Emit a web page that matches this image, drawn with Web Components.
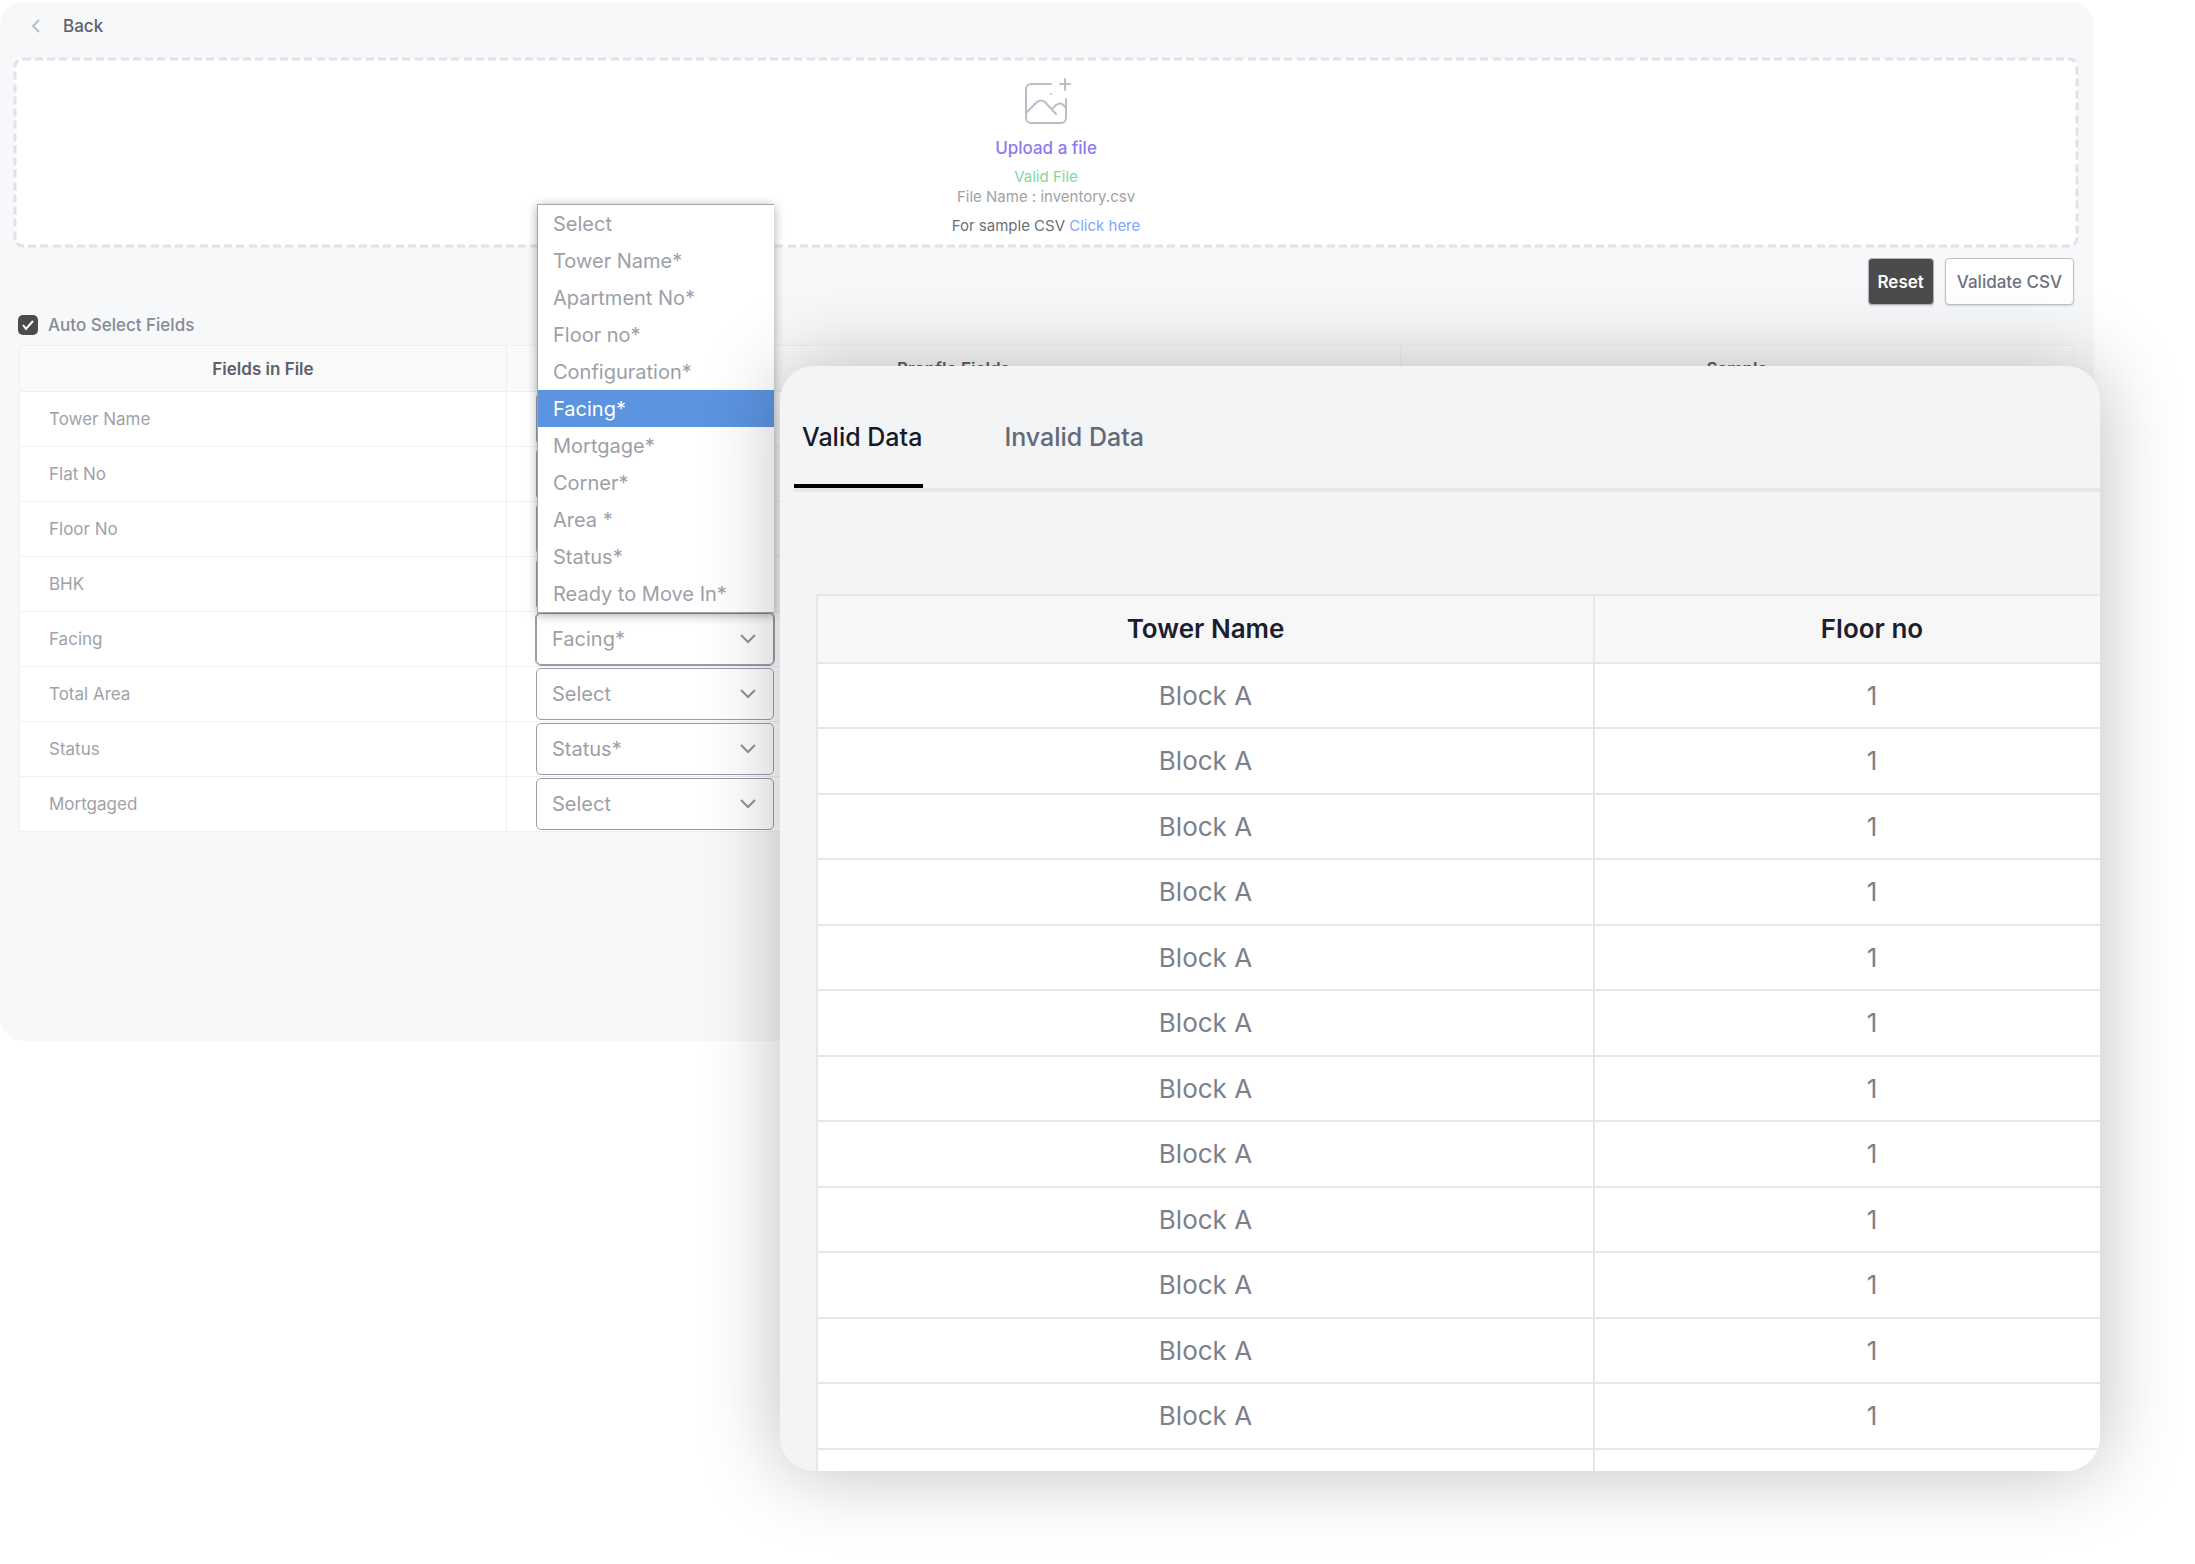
<!DOCTYPE html>
<html lang="en">
<head>
<meta charset="utf-8">
<title>Inventory import</title>
<style>
  body { margin: 0; font-family: Inter, "Liberation Sans", sans-serif; background: #fff; }
</style>
</head>
<body>
<import-page></import-page>
<script>
const define = (name, html, setup) => {
  const template = document.createElement('template');
  template.innerHTML = html;
  customElements.define(name, class extends HTMLElement {
    connectedCallback() {
      if (this.shadowRoot) return;
      const root = this.attachShadow({ mode: 'open' });
      root.append(template.content.cloneNode(true));
      if (setup) setup(root, this);
    }
  });
};

define('back-link', `
<style>
  :host { display: block; }
  a { display: inline-flex; align-items: center; gap: 23px; padding: 12px 30px; color: #5b606c;
      font-size: 17px; font-weight: 500; line-height: 24px; text-decoration: none; }
  svg { width: 10px; height: 14px; fill: none; stroke: #b9bdc6; stroke-width: 2; }
</style>
<a href="#back"><svg viewBox="0 0 10 14" aria-hidden="true"><path d="M9 1 3 7l6 6"/></svg><slot></slot></a>`);

define('upload-box', `
<style>
  :host { display: grid; margin: 0 15px 0 13px; }
  .frame, .body { grid-area: 1 / 1; }
  .frame { width: 100%; height: 100%; min-height: 0; contain: size; }
  .frame rect { x: 2px; y: 2px; width: calc(100% - 4px); height: calc(100% - 4px); fill: #fff; stroke: #e0e2e7;
      stroke-width: 3; stroke-dasharray: 8 4 8 4 8 4 8 5; }
  .body { display: flex; flex-direction: column; align-items: center; padding: 20px 0 12px; }
  .icon { width: 50px; height: 50px; fill: none; stroke: #b9bdc6; stroke-width: 2; stroke-linecap: round; }
  .upload { margin: 9px 0 7px; border: 0; padding: 0; background: none; color: #8b7bf0; font: 500 17px/24px Inter, sans-serif; }
  p { margin: 0; font-size: 15px; line-height: 20px; color: #a0a2a8; }
  .ok { color: #7fd8a0; }
  .sample { margin-top: 9px; color: #6a6f7b; }
  a { color: #82a6fa; text-decoration: none; }
</style>
<svg class="frame" aria-hidden="true"><rect rx="8"/></svg>
<div class="body">
  <svg class="icon" viewBox="-1 0 50 50" aria-hidden="true">
    <path d="M29 7H9a5 5 0 0 0-5 5v29a5 5 0 0 0 5 5h30a5 5 0 0 0 5-5V22M43 2v11M38 7h10"/>
    <path d="M5 35 15 25q4-3 8 0L34 37M30 32l4-4q5-4 9 2"/><circle cx="29" cy="17" r="1" fill="#b9bdc6" stroke="none"/>
  </svg>
  <button class="upload" type="button">Upload a file</button>
  <p class="ok">Valid File</p>
  <p>File Name : inventory.csv</p>
  <p class="sample">For sample CSV <a href="#sample">Click here</a></p>
</div>`);

define('app-button', `
<style>
  :host { display: block; }
  button { display: block; height: 47px; padding: 0 11px; border: 1px solid #bcc0cb; border-radius: 4px; background: #fff;
      color: #6d727e; font: 500 17px/24px Inter, sans-serif; box-shadow: 0 1px 2px #0002; }
  :host([primary]) button { padding: 0 9px; background: #4b4b4b; border-color: #b4b6bb; color: #fff; font-weight: 600; }
</style>
<button type="button"><slot></slot></button>`);

define('check-field', `
<style>
  :host { display: block; }
  label { display: inline-flex; align-items: center; gap: 10px; color: #868b96; font-size: 17px; font-weight: 500; line-height: 24px; }
  .box { display: grid; }
  input, svg { grid-area: 1 / 1; width: 20px; height: 20px; margin: 0; }
  input { appearance: none; border-radius: 5px; background: #4b4b4b; }
  svg { fill: none; stroke: #fff; stroke-width: 2; pointer-events: none; }
</style>
<label><span class="box"><input type="checkbox" checked><svg viewBox="0 0 20 20" aria-hidden="true"><path d="m5 10 3 4 7-8"/></svg></span><slot></slot></label>`);

define('field-select', `
<style>
  :host { display: block; position: relative; width: 238px; }
  .control { display: grid; align-items: center; }
  select, svg { grid-area: 1 / 1; }
  select { appearance: none; box-sizing: border-box; width: 100%; height: 52px; padding: 0 15px; border: 1px solid #9a9da8;
      border-radius: 5px; background: #fff; color: #9ca0a8; font: 400 20px/26px Inter, sans-serif; }
  svg { justify-self: end; width: 16px; height: 10px; margin-right: 18px; fill: none; stroke: #8f929c; stroke-width: 2; pointer-events: none; }
  :host([open]) select { outline: 1px solid #9a9da8; }
  ul { display: none; position: absolute; left: 1px; right: 0; bottom: 100%; margin: 0; padding: 0; list-style: none;
      border: solid #a5a5a5; border-width: 1px 0 1px 1px; background: #fff; box-shadow: 0 2px 10px #0005; z-index: 1; }
  :host([open]) ul { display: block; }
  li { padding: 6px 15px 5px; color: #9ca0a8; font-size: 20px; line-height: 26px; text-align: left; }
  li[aria-selected="true"] { background: #5c94e0; color: #fff; }
</style>
<div class="control"><select></select><svg viewBox="0 0 16 10" aria-hidden="true"><path d="m1 1 7 7 7-7"/></svg></div>
<ul role="listbox"></ul>`, (root, host) => {
  const options = ['Select', 'Tower Name*', 'Apartment No*', 'Floor no*', 'Configuration*', 'Facing*', 'Mortgage*', 'Corner*', 'Area *', 'Status*', 'Ready to Move In*'];
  const value = host.getAttribute('value');
  const select = root.querySelector('select');
  select.setAttribute('aria-label', host.getAttribute('label'));
  for (const text of options) {
    select.add(new Option(text, text, false, text === value));
    if (!host.hasAttribute('open')) continue;
    const li = document.createElement('li');
    li.setAttribute('role', 'option');
    li.setAttribute('aria-selected', text === value);
    li.textContent = text;
    root.querySelector('ul').append(li);
  }
});

define('field-map', `
<style>
  :host { display: block; margin: 6px 20px 0 19px; }
  table { width: 100%; border-collapse: collapse; table-layout: fixed; background: #fff; }
  th, td { box-sizing: border-box; border: 1px solid #eef0f2; padding: 0 29px; text-align: left; font-size: 17px; font-weight: 400;
      line-height: 24px; color: #a0a2a8; }
  thead th { height: 46px; padding: 0; background: #fafafa; color: #5b606c; font-weight: 600; text-align: center; }
  tbody tr { height: 55px; }
  .file { width: 487px; }
  .target { width: 894px; }
</style>
<table>
  <thead><tr><th class="file">Fields in File</th><th class="target">Propflo Fields</th><th>Sample</th></tr></thead>
  <tbody></tbody>
</table>`, root => {
  const rows = [['Tower Name', 'Tower Name*'], ['Flat No', 'Apartment No*'], ['Floor No', 'Floor no*'], ['BHK', 'Configuration*'],
    ['Facing', 'Facing*', 'open'], ['Total Area', 'Select'], ['Status', 'Status*'], ['Mortgaged', 'Select']];
  root.querySelector('tbody').innerHTML = rows.map(([name, value, state = '']) =>
    `<tr><th scope="row">${name}</th><td><field-select label="${name}" value="${value}" ${state}></field-select></td><td></td></tr>`).join('');
});

define('data-tabs', `
<style>
  :host { display: block; margin-left: 14px; }
  nav { display: flex; gap: 73px; border-bottom: 4px solid #e6e8ea; }
  button { border: 0; border-bottom: 4px solid transparent; padding: 54px 1px 30px 8px; background: none; color: #626978;
      font: 500 25px/34px Inter, sans-serif; }
  button[aria-selected="true"] { border-color: #000; color: #151a2a; }
</style>
<nav role="tablist">
  <button type="button" role="tab" aria-selected="true">Valid Data</button>
  <button type="button" role="tab" aria-selected="false">Invalid Data</button>
</nav>`);

define('data-table', `
<style>
  :host { display: block; margin: 102px -51px 0 36px; }
  table { width: 100%; border-collapse: collapse; table-layout: fixed; background: #fff; }
  th, td { box-sizing: border-box; border: 2px solid #e6e7ec; padding: 0; text-align: center; font-size: 26px; line-height: 34px; }
  th { height: 68px; background: #f7f7f7; color: #1b2030; font-weight: 600; }
  th:first-child { width: 777px; }
  td { color: #7b808b; }
  tbody tr { height: 65px; }
  tbody tr:nth-child(even) { height: 66px; }
</style>
<table>
  <thead><tr><th>Tower Name</th><th>Floor no</th></tr></thead>
  <tbody></tbody>
</table>`, root => {
  root.querySelector('tbody').innerHTML = '<tr><td>Block A</td><td>1</td></tr>'.repeat(12) + '<tr><td></td><td></td></tr>';
});

define('data-panel', `
<style>
  :host { display: block; overflow: hidden; border-radius: 34px; background: #f3f4f6; box-shadow: 0 0 80px #00000042; }
</style>
<data-tabs></data-tabs>
<data-table></data-table>`);

define('import-page', `
<style>
  :host { display: block; position: relative; box-sizing: border-box; min-height: 100vh; padding-top: 2px; overflow: hidden; }
  main { margin-right: 101px; padding: 0 0 209px; border-radius: 24px; background: #f7f8fa; }
  back-link { padding: 0 0 7px; }
  .actions { display: flex; justify-content: flex-end; gap: 11px; padding: 10px 20px 8px; }
  check-field { margin-left: 18px; }
  data-panel { position: absolute; inset: 366px 95px 93px 780px; z-index: 2; }
</style>
<main>
  <back-link>Back</back-link>
  <upload-box></upload-box>
  <div class="actions"><app-button primary>Reset</app-button><app-button>Validate CSV</app-button></div>
  <check-field>Auto Select Fields</check-field>
  <field-map></field-map>
</main>
<data-panel></data-panel>`);
</script>
</body>
</html>
